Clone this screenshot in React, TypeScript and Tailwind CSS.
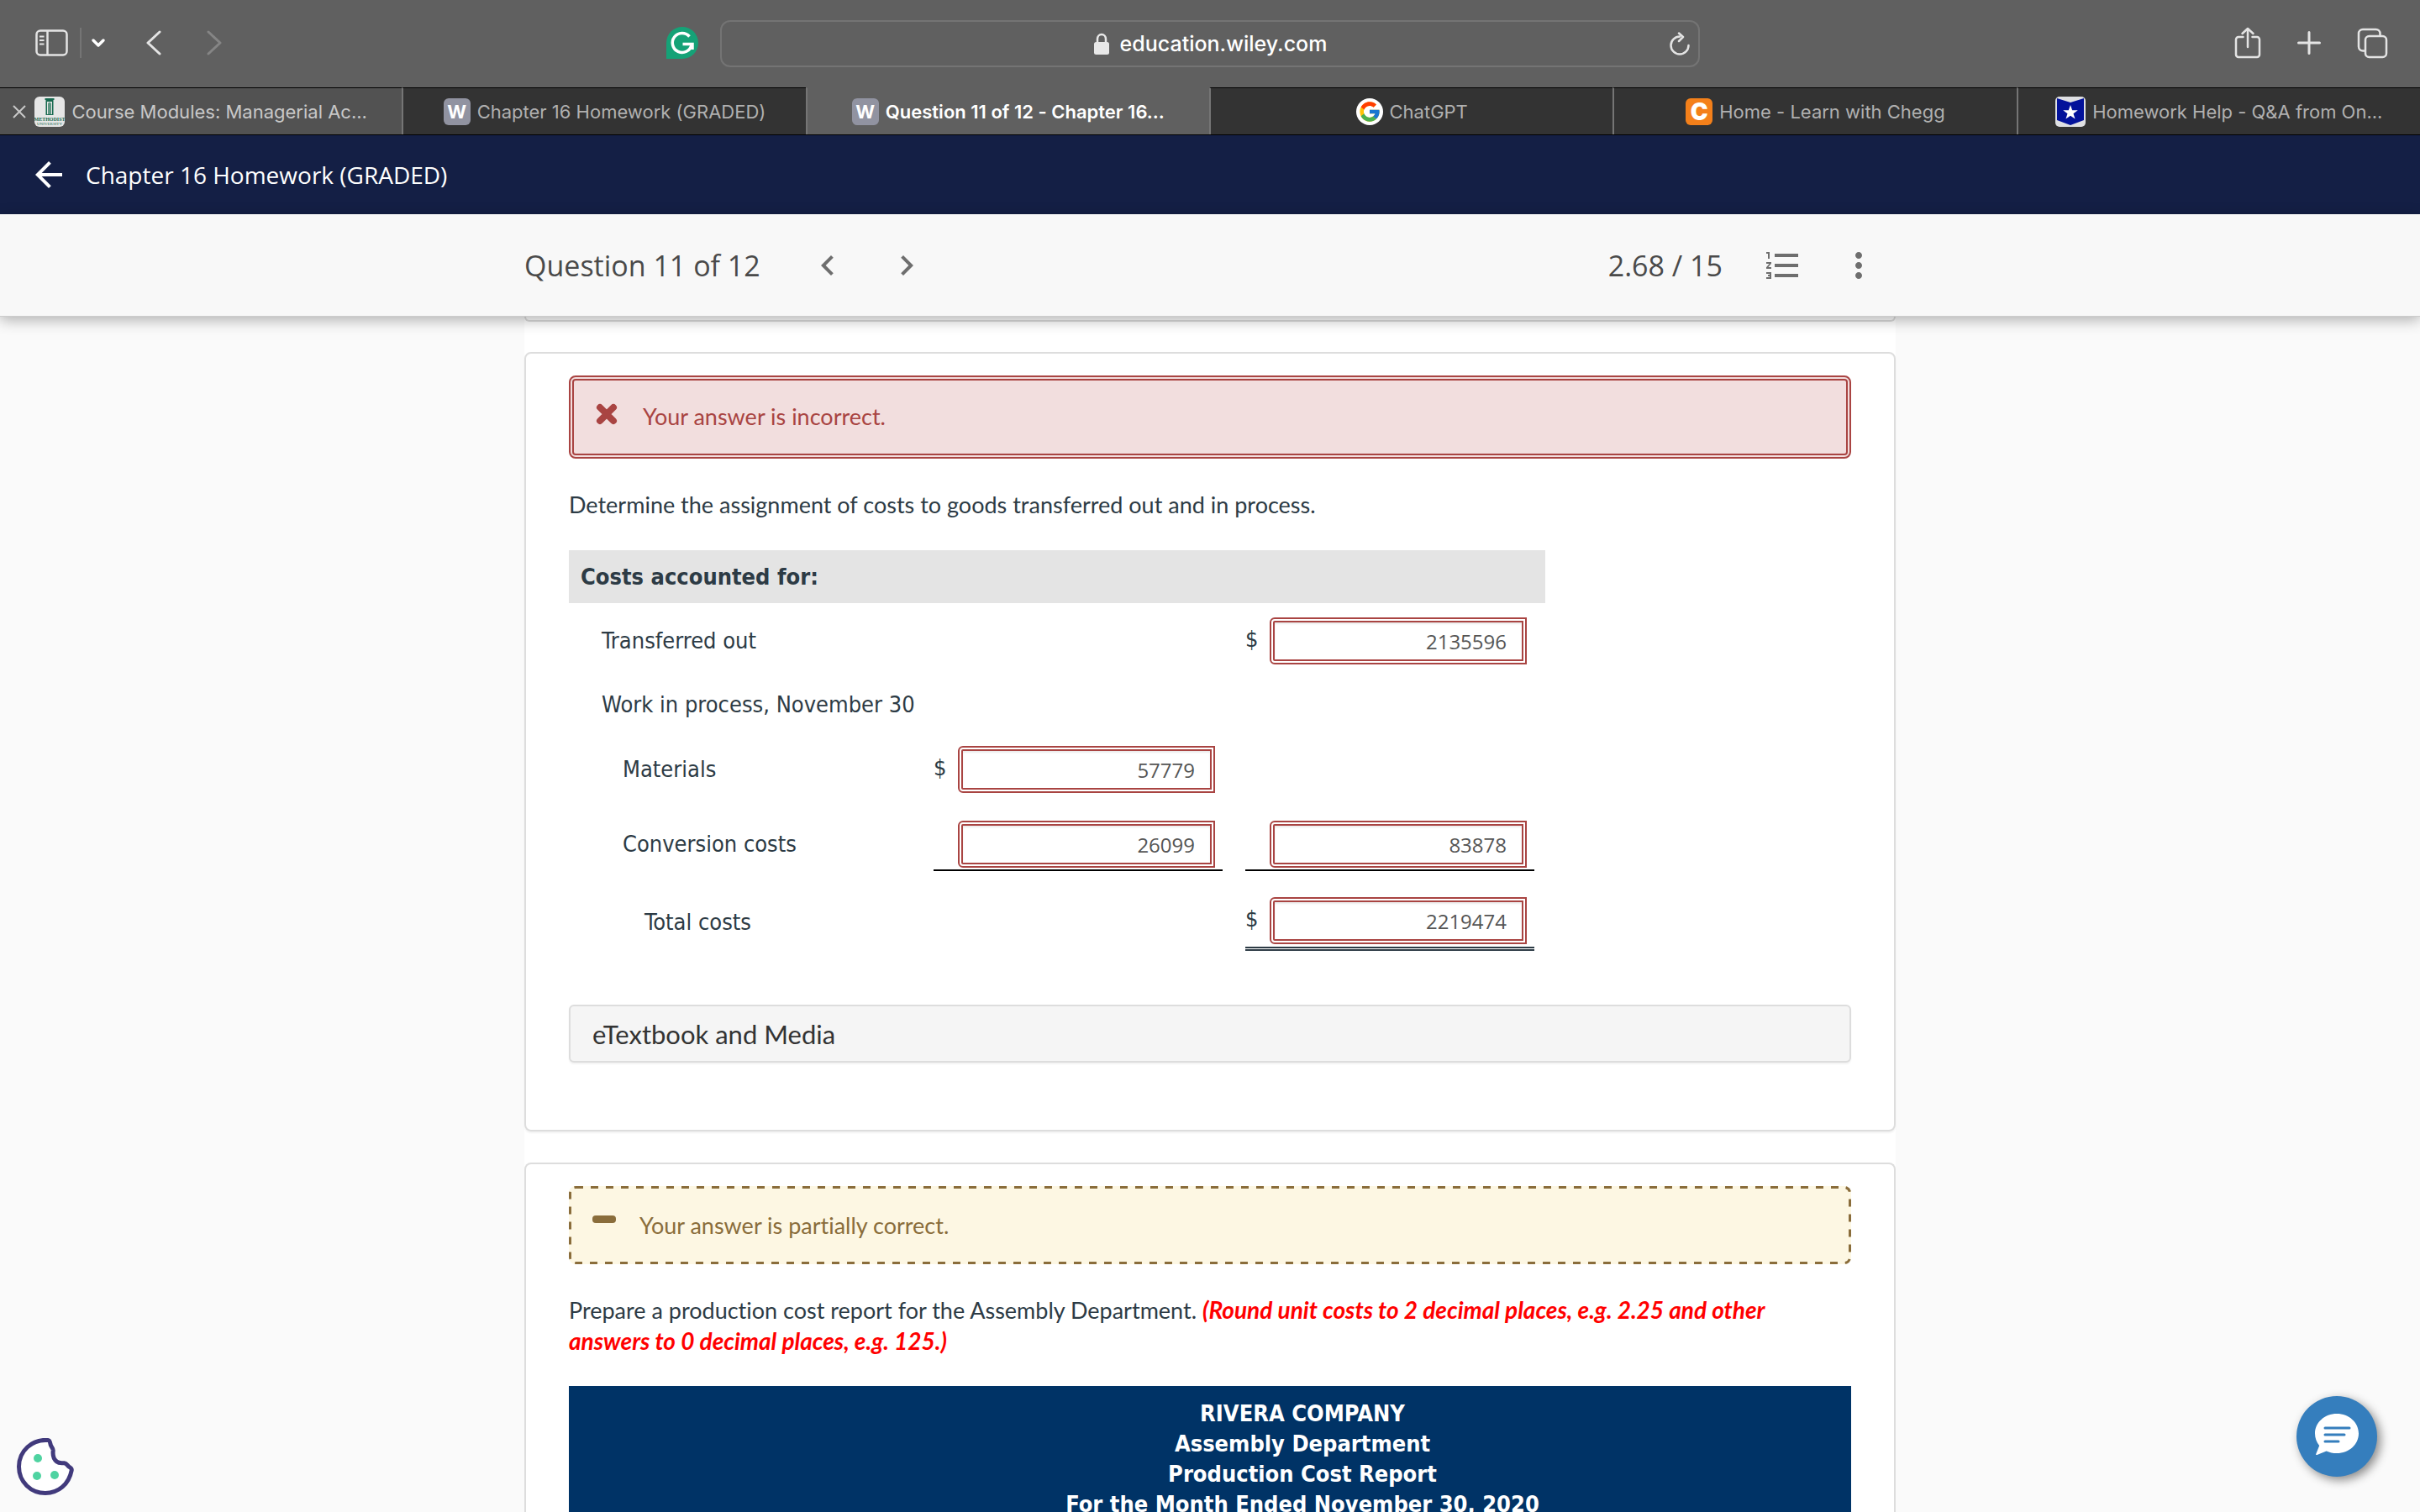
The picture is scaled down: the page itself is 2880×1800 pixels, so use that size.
import { ReactNode } from "react";
import clsx from "clsx";
import { FcGoogle } from "react-icons/fc";
import {
  MdArrowBack,
  MdChevronLeft,
  MdChevronRight,
  MdFormatListNumbered,
  MdMoreVert,
} from "react-icons/md";

type Tab = {
  title: string;
  icon: ReactNode;
  active?: boolean;
  hovered?: boolean;
};

type CostRow = {
  label: string;
  indent: string;
  height: string;
  left?: Amount;
  right?: Amount;
};

type Amount = {
  value: string;
  dollar?: boolean;
  rule?: "single" | "double";
};

function LetterIcon({ letter, className }: { letter: string; className: string }) {
  return (
    <span
      className={clsx(
        "flex size-8 shrink-0 items-center justify-center rounded-md leading-none text-white",
        className
      )}
    >
      {letter}
    </span>
  );
}

function MethodistIcon() {
  return (
    <svg viewBox="0 0 36 36" className="size-9 shrink-0">
      <rect width="36" height="36" rx="6" fill="#e6e6e6" />
      <path d="M12.500 2h11v2h-1v18h-9V4h-1z" fill="#17694f" />
      <path d="M15 6h6v15h-6z" fill="#e6e6e6" />
      <path d="M16 8l2-1.500 2 1.500v13h-4z" fill="#5f9683" />
      <text x="18" y="28.500" textAnchor="middle" fontSize="6" fontFamily="Liberation Serif, serif" fontWeight="700" fill="#17694f">
        METHODIST
      </text>
      <text x="18" y="34" textAnchor="middle" fontSize="5" fontFamily="Liberation Serif, serif" fill="#17694f">
        UNIVERSITY
      </text>
    </svg>
  );
}

function StarIcon() {
  return (
    <svg viewBox="0 0 36 36" className="size-9 shrink-0">
      <rect width="36" height="36" rx="5" fill="#dfe0e3" />
      <path d="M2 2l16 5 16-5v26l-16 6-16-6z" fill="#03129a" />
      <path d="M18 10l2.200 6.200h6.600l-5.300 4 2 6.400-5.500-3.900-5.500 3.900 2-6.400-5.300-4h6.600z" fill="#fff" />
    </svg>
  );
}

function GrammarlyIcon() {
  return (
    <svg viewBox="0 0 38 38" className="size-[38px]">
      <path d="M19 0a19 19 0 1 1 0 38H0V19A19 19 0 0 1 19 0z" fill="#15a277" />
      <path d="M27.500 11.500A11.500 11.500 0 1 0 30 21.500" fill="none" stroke="#fff" strokeWidth="3.500" />
      <path d="M19.500 20.500h11.500v6.500" fill="none" stroke="#fff" strokeWidth="3.500" />
    </svg>
  );
}

const tabs: Tab[] = [
  { title: "Course Modules: Managerial Ac...", icon: <MethodistIcon />, hovered: true },
  {
    title: "Chapter 16 Homework (GRADED)",
    icon: <LetterIcon letter="W" className="bg-[#9193a1] text-[22px] font-bold" />,
  },
  {
    title: "Question 11 of 12 - Chapter 16...",
    icon: <LetterIcon letter="W" className="bg-[#9193a1] text-[22px] font-bold" />,
    active: true,
  },
  {
    title: "ChatGPT",
    icon: (
      <span className="flex size-8 shrink-0 items-center justify-center rounded-full bg-white">
        <FcGoogle size={28} />
      </span>
    ),
  },
  {
    title: "Home - Learn with Chegg",
    icon: <LetterIcon letter="C" className="bg-[#f4801a] text-[28px] font-black" />,
  },
  { title: "Homework Help - Q&A from On...", icon: <StarIcon /> },
];

const rows: CostRow[] = [
  {
    label: "Transferred out",
    indent: "pl-[39px]",
    height: "h-[90px]",
    right: { value: "2135596", dollar: true },
  },
  { label: "Work in process, November 30", indent: "pl-[39px]", height: "h-[62px]" },
  {
    label: "Materials",
    indent: "pl-16",
    height: "h-[92px]",
    left: { value: "57779", dollar: true },
  },
  {
    label: "Conversion costs",
    indent: "pl-16",
    height: "h-[86px]",
    left: { value: "26099", rule: "single" },
    right: { value: "83878", rule: "single" },
  },
  {
    label: "Total costs",
    indent: "pl-[90px] pt-1",
    height: "h-24",
    right: { value: "2219474", dollar: true, rule: "double" },
  },
];

function Toolbar() {
  return (
    <div className="grid h-[104px] grid-cols-[1fr_1166px_1fr] bg-[#606060] text-[#e4e4e4]">
      <div className="flex items-center pb-0.5 pl-[42px]">
        <button aria-label="Show sidebar">
          <svg viewBox="0 0 40 32" className="h-8 w-10" fill="none" stroke="currentColor" strokeWidth="2.500">
            <rect x="1.500" y="1.500" width="36" height="29" rx="4.500" />
            <path d="M14.500 2v28" />
            <path d="M5 8.500h5.500M5 13h5.500M5 17.500h5.500" strokeWidth="2" />
          </svg>
        </button>
        <span className="mr-[11px] ml-[13px] h-9 w-0.5 bg-[#757575]" />
        <button aria-label="Tab groups">
          <svg viewBox="0 0 18 12" className="h-3 w-[18px]" fill="none" stroke="#fff" strokeWidth="3.500" strokeLinecap="round" strokeLinejoin="round">
            <path d="M3 3l6 6 6-6" />
          </svg>
        </button>
        <button aria-label="Back" className="ml-[47px]">
          <svg viewBox="0 0 20 30" className="h-[30px] w-5" fill="none" stroke="currentColor" strokeWidth="3" strokeLinecap="round" strokeLinejoin="round">
            <path d="M17 2L3 15l14 13" />
          </svg>
        </button>
        <button aria-label="Forward" className="ml-[52px] text-[#858585]">
          <svg viewBox="0 0 20 30" className="h-[30px] w-5" fill="none" stroke="currentColor" strokeWidth="3" strokeLinecap="round" strokeLinejoin="round">
            <path d="M3 2l14 13L3 28" />
          </svg>
        </button>
        <button aria-label="Grammarly" className="mr-[26px] ml-auto">
          <GrammarlyIcon />
        </button>
      </div>
      <div className="relative flex h-14 items-center justify-center gap-3 self-center rounded-xl border-2 border-[#747474] text-[25px] font-medium text-white">
        <svg viewBox="0 0 20 26" className="h-[26px] w-5" fill="none">
          <path d="M5 13V7.500a5 5.500 0 0 1 10 0V13" stroke="#e8e8e8" strokeWidth="2.500" />
          <rect x="1" y="11" width="18" height="15" rx="2.500" fill="#e8e8e8" />
        </svg>
        <span>education.wiley.com</span>
        <button aria-label="Reload" className="absolute right-2.5">
          <svg viewBox="0 0 24 28" className="h-7 w-6" fill="none" stroke="#e4e4e4" strokeWidth="2.500" strokeLinecap="round" strokeLinejoin="round">
            <path d="M12 5.500A10.500 10.500 0 1 0 22.500 16" />
            <path d="M11 1.500l5 4.500-5 5" />
          </svg>
        </button>
      </div>
      <div className="flex items-center justify-end gap-[42px] pr-[38px] pb-0.5">
        <button aria-label="Share">
          <svg viewBox="0 0 32 38" className="h-[38px] w-8" fill="none" stroke="currentColor" strokeWidth="2.500" strokeLinecap="round" strokeLinejoin="round">
            <path d="M10.500 12H5a3 3 0 0 0-3 3v18a3 3 0 0 0 3 3h22a3 3 0 0 0 3-3V15a3 3 0 0 0-3-3h-5.500" />
            <path d="M16 24V2M9.500 8L16 2l6.500 6" />
          </svg>
        </button>
        <button aria-label="New tab">
          <svg viewBox="0 0 30 30" className="size-[30px]" stroke="currentColor" strokeWidth="3" strokeLinecap="round">
            <path d="M15 2.500v25M2.500 15h25" />
          </svg>
        </button>
        <button aria-label="Show all tabs">
          <svg viewBox="0 0 37 37" className="size-[37px]" fill="none" stroke="currentColor" strokeWidth="2.500">
            <path d="M10 27.500H7a5 5 0 0 1-5-5V7a5 5 0 0 1 5-5h15.500a5 5 0 0 1 5 5v2.500" />
            <rect x="10" y="10" width="25" height="25" rx="4.500" />
          </svg>
        </button>
      </div>
    </div>
  );
}

function TabBar() {
  return (
    <nav className="flex h-[57px] border-b border-black">
      {tabs.map((tab, index) => (
        <div
          key={tab.title}
          className={clsx(
            "relative flex min-w-0 flex-1 items-center justify-center gap-2 border-t text-[22px]",
            index > 0 && "border-l-2 border-l-[#757575]",
            tab.active
              ? "border-t-[#606060] bg-[#606060] font-semibold text-white"
              : "border-t-black text-[#b0b0b0]",
            tab.hovered && "bg-[#525252] text-[#c8c8c8]",
            !tab.active && !tab.hovered && "bg-[#333]"
          )}
        >
          {tab.hovered && (
            <button aria-label="Close tab" className="absolute left-[15px]">
              <svg viewBox="0 0 16 16" className="size-4" stroke="currentColor" strokeWidth="2">
                <path d="M1 1l14 14M15 1L1 15" />
              </svg>
            </button>
          )}
          {tab.icon}
          <a href="#" className="whitespace-nowrap">
            {tab.title}
          </a>
        </div>
      ))}
    </nav>
  );
}

function AmountField({ label, amount }: { label: string; amount: Amount }) {
  return (
    <div
      className={clsx(
        "flex w-[344px] items-center",
        amount.rule === "single" && "border-b-2 border-black pt-1 pb-0.5",
        amount.rule === "double" && "border-b-[5px] border-double border-[#2d3b45] pt-2 pb-[3px]"
      )}
    >
      <span className="w-[29px] shrink-0 pb-1">{amount.dollar && "$"}</span>
      <input
        type="text"
        aria-label={label}
        defaultValue={amount.value}
        className="h-14 w-[306px] rounded-l-md border-[6px] border-double border-[#a94442] bg-white px-[18px] text-right font-['Open_Sans',sans-serif] text-2xl text-[#555] shadow-[inset_0_2px_2px_rgba(0,0,0,0.08)]"
      />
    </div>
  );
}

function CostTable() {
  return (
    <table className="mt-9 w-full max-w-[1162px] table-fixed text-left font-['DejaVu_Sans_Condensed','DejaVu_Sans',sans-serif]">
      <colgroup>
        <col />
        <col className="w-[371px]" />
        <col className="w-[357px]" />
      </colgroup>
      <thead>
        <tr className="h-[63px] bg-[#e4e4e4]">
          <th colSpan={3} className="pl-3.5 font-bold">
            Costs accounted for:
          </th>
        </tr>
      </thead>
      <tbody>
        {rows.map((row) => (
          <tr key={row.label} className={row.height}>
            <td className={clsx("whitespace-nowrap", row.indent)}>{row.label}</td>
            <td>{row.left && <AmountField label={row.label} amount={row.left} />}</td>
            <td>{row.right && <AmountField label={`${row.label} total`} amount={row.right} />}</td>
          </tr>
        ))}
      </tbody>
    </table>
  );
}

function App() {
  return (
    <div className="flex h-screen flex-col overflow-hidden bg-[#fafafa] font-['Lato',sans-serif] text-[27px] leading-9 text-[#2d3b45] [font-variant-ligatures:none]">
      <div className="shrink-0 font-['Inter',sans-serif] leading-none">
        <Toolbar />
        <TabBar />
      </div>

      <header className="flex h-[94px] shrink-0 items-center gap-5 bg-[#141f45] pl-[34px] font-['Open_Sans',sans-serif] text-[28px] text-white">
        <button aria-label="Back to assignments">
          <MdArrowBack size={48} />
        </button>
        <h1 className="font-medium">Chapter 16 Homework (GRADED)</h1>
      </header>

      <div className="z-10 shrink-0 border-b border-[#ccc] bg-[#f8f8f8] shadow-[0_4px_16px_rgba(0,0,0,0.3)]">
        <div className="mx-auto flex h-[121px] w-full max-w-[1632px] items-center font-['Open_Sans',sans-serif] text-[34px] text-[#4a4a4a]">
          <h2>Question 11 of 12</h2>
          <button aria-label="Previous question" className="ml-14 text-[#6e6e6e]">
            <MdChevronLeft size={48} />
          </button>
          <button aria-label="Next question" className="ml-[46px] text-[#6e6e6e]">
            <MdChevronRight size={48} />
          </button>
          <span className="ml-auto">2.68 / 15</span>
          <button aria-label="Question list" className="ml-12 text-[#6e6e6e]">
            <MdFormatListNumbered size={48} />
          </button>
          <button aria-label="More options" className="mr-5 ml-[42px] text-[#6e6e6e]">
            <MdMoreVert size={48} />
          </button>
        </div>
      </div>

      <main className="mx-auto flex min-h-0 w-full max-w-[1632px] flex-1 flex-col bg-white">
        <div className="h-1.5 shrink-0 rounded-b-lg border-2 border-t-0 border-[#ddd]" />

        <section className="mt-9 shrink-0 rounded-lg border-2 border-[#ddd] px-[51px] pt-[26px] pb-20 shadow-[0_2px_2px_rgba(0,0,0,0.05)]">
          <div role="alert" className="flex h-[99px] items-center gap-[30px] rounded-lg border-[6px] border-double border-[#a94442] bg-[#f2dede] pb-0.5 pl-[26px] text-[#a94442]">
            <svg viewBox="0 0 26 26" className="mb-1.5 size-[26px]" stroke="currentColor" strokeWidth="8" strokeLinecap="round">
              <path d="M5 5l16 16M21 5L5 21" />
            </svg>
            Your answer is incorrect.
          </div>
          <p className="mt-[37px]">
            Determine the assignment of costs to goods transferred out and in process.
          </p>
          <CostTable />
          <button className="mt-[52px] block h-[69px] w-full rounded-md border-2 border-[#ddd] bg-[#f5f5f5] px-[26px] text-left text-[31px] text-[#333] shadow-[0_2px_2px_rgba(0,0,0,0.05)]">
            eTextbook and Media
          </button>
        </section>

        <section className="mt-[37px] shrink-0 rounded-t-lg border-2 border-b-0 border-[#ddd] px-[51px] pt-[26px]">
          <div role="alert" className="relative flex h-[93px] items-center gap-7 rounded-lg bg-[#fdf7e3] pl-7 text-[#8a6d3b]">
            {/* dashed outline */}
            <svg className="absolute inset-0 size-full rounded-lg" fill="none" aria-hidden="true">
              <rect width="100%" height="100%" rx="8" stroke="#8a6d3b" strokeWidth="6" strokeDasharray="9 9" />
            </svg>
            <span className="mb-3.5 h-[9px] w-7 rounded-sm bg-[#8a6d3b]" />
            Your answer is partially correct.
          </div>
          <p className="mt-9">
            Prepare a production cost report for the Assembly Department.{" "}
            <em className="text-[28px] font-bold text-[#f00]">
              (Round unit costs to 2 decimal places, e.g. 2.25 and other
              <br />
              answers to 0 decimal places, e.g. 125.)
            </em>
          </p>
          <table className="mt-[35px] w-full bg-[#036] font-['DejaVu_Sans_Condensed','DejaVu_Sans',sans-serif] text-white">
            <thead>
              <tr>
                <th className="pt-[15px] pb-3 pl-[220px] text-center font-bold">
                  RIVERA COMPANY
                  <br />
                  Assembly Department
                  <br />
                  Production Cost Report
                  <br />
                  For the Month Ended November 30, 2020
                </th>
              </tr>
            </thead>
          </table>
        </section>
      </main>

      <button aria-label="Cookie preferences" className="fixed bottom-5 left-5 z-20">
        <svg viewBox="0 0 68 68" className="size-[68px]">
          <path
            d="M37 2.500c-19-1.500-34.500 13-34.500 31.500S17 65.500 34 65.500c15.500 0 28-10.500 31.200-27 .4-2-.7-3-2.700-4.200-2-1.200-3-4-6-4.500-3-.4-6 .7-9-1.800-4-3.200-5-7-4.300-13 .2-2.500-1.700-4-2.700-6.300-1-2.200-.5-6-3.500-6.200z"
            fill="#fff"
            stroke="#413a7c"
            strokeWidth="5"
            strokeLinejoin="round"
          />
          <g fill="#4fd3a1">
            <circle cx="25" cy="24" r="5" />
            <circle cx="24" cy="45" r="5" />
            <circle cx="45" cy="44" r="5" />
          </g>
        </svg>
      </button>

      <button
        aria-label="Open chat"
        className="fixed right-[51px] bottom-[42px] z-20 flex size-24 items-center justify-center rounded-full bg-[#357ebd] shadow-[4px_4px_12px_rgba(0,0,0,0.45)]"
      >
        <svg viewBox="0 0 52 50" className="mb-1 h-[50px] w-[52px]">
          <path d="M26 0c14.500 0 26 10.500 26 23.500S40.500 47 26 47c-4.500 0-8.700-.9-12.400-2.600L2.500 49c-1.200.4-1.600-.3-1.200-1.200L5.200 38C1.900 34 0 29 0 23.500 0 10.500 11.500 0 26 0z" fill="#fff" />
          <path d="M12 17h29M12 25h23M12 33h16" stroke="#357ebd" strokeWidth="3" strokeLinecap="round" />
        </svg>
      </button>
    </div>
  );
}

export default App;
